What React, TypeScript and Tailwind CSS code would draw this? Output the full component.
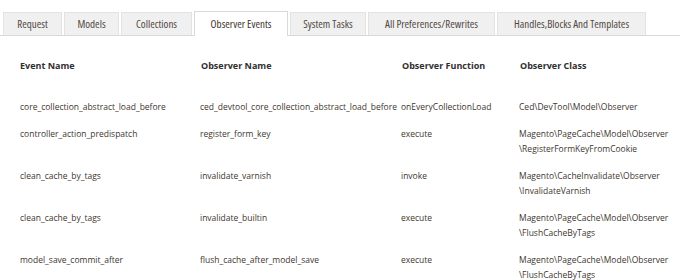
import React from "react";

interface ObserverRow {
  event: string;
  observer: string;
  fn: string;
  cls: string[];
}

const tabs = [
  { label: "Request", w: "w-[59px]" },
  { label: "Models", w: "w-[55px]" },
  { label: "Collections", w: "w-[71px]" },
  { label: "Observer Events", w: "w-[94px]" },
  { label: "System Tasks", w: "w-[76px]" },
  { label: "All Preferences/Rewrites", w: "w-[127px]" },
  { label: "Handles,Blocks And Templates", w: "w-[149px]" },
];

const rows: ObserverRow[] = [
  {
    event: "core_collection_abstract_load_before",
    observer: "ced_devtool_core_collection_abstract_load_before",
    fn: "onEveryCollectionLoad",
    cls: ["Ced\\DevTool\\Model\\Observer"],
  },
  {
    event: "controller_action_predispatch",
    observer: "register_form_key",
    fn: "execute",
    cls: ["Magento\\PageCache\\Model\\Observer", "\\RegisterFormKeyFromCookie"],
  },
  {
    event: "clean_cache_by_tags",
    observer: "invalidate_varnish",
    fn: "invoke",
    cls: ["Magento\\CacheInvalidate\\Observer", "\\InvalidateVarnish"],
  },
  {
    event: "clean_cache_by_tags",
    observer: "invalidate_builtin",
    fn: "execute",
    cls: ["Magento\\PageCache\\Model\\Observer", "\\FlushCacheByTags"],
  },
  {
    event: "model_save_commit_after",
    observer: "flush_cache_after_model_save",
    fn: "execute",
    cls: ["Magento\\PageCache\\Model\\Observer", "\\FlushCacheByTags"],
  },
];

export default function App() {
  const active = "Observer Events";

  return (
    <div className="w-[683px] h-[280px] overflow-hidden bg-white font-['Open_Sans',sans-serif] text-[#41362f]">
      {/* tabs */}
      <div className="flex items-end gap-[2px] pl-[3px] pt-[11px] border-b border-[#d9d9d9] mr-[3px]">
        {tabs.map((t) =>
          t.label === active ? (
            <div
              key={t.label}
              className={`${t.w} h-[25px] -mb-px flex items-center justify-center whitespace-nowrap bg-white border border-b-0 border-[#d9d9d9] text-[11px] [font-stretch:75%] text-[#41362f]`}
            >
              {t.label}
            </div>
          ) : (
            <div
              key={t.label}
              className={`${t.w} h-[23px] flex items-center justify-center whitespace-nowrap bg-[#f0f0f0] border border-b-0 border-[#e3e3e3] text-[11px] [font-stretch:75%] text-[#514943]`}
            >
              {t.label}
            </div>
          )
        )}
      </div>

      {/* observer table */}
      <div className="pl-[20px] leading-[15px]">
        <div className="flex font-bold text-[9px] text-[#303030] pt-[22px] pb-[20px]">
          <div className="w-[181px]">Event Name</div>
          <div className="w-[201px]">Observer Name</div>
          <div className="w-[118px]">Observer Function</div>
          <div>Observer Class</div>
        </div>
        {rows.map((r, i) => (
          <div key={i} className="flex py-[6px] text-[8.5px]">
            <div className="w-[180px]">{r.event}</div>
            <div className="w-[201px]">{r.observer}</div>
            <div className="w-[118px]">{r.fn}</div>
            <div>
              {r.cls.map((c) => (
                <div key={c}>{c}</div>
              ))}
            </div>
          </div>
        ))}
      </div>
    </div>
  );
}
